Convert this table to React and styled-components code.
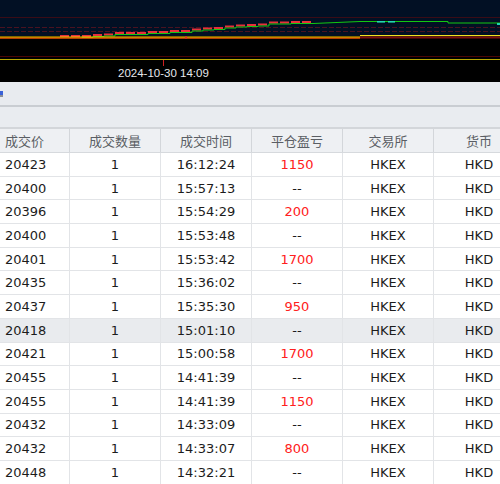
import React from "react";
import styled, { createGlobalStyle } from "styled-components";

const GlobalStyle = createGlobalStyle`
  html, body { margin: 0; padding: 0; background: #ffffff; }
  body { font-family: "DejaVu Sans", "Noto Sans CJK SC", sans-serif; }
`;

const columns = [
  { key: "price", label: "成交价", align: "left" },
  { key: "qty", label: "成交数量" },
  { key: "time", label: "成交时间" },
  { key: "pnl", label: "平仓盈亏" },
  { key: "exchange", label: "交易所" },
  { key: "currency", label: "货币" },
];

const trades = [
  ["20423", "1", "16:12:24", "1150"],
  ["20400", "1", "15:57:13", "--"],
  ["20396", "1", "15:54:29", "200"],
  ["20400", "1", "15:53:48", "--"],
  ["20401", "1", "15:53:42", "1700"],
  ["20435", "1", "15:36:02", "--"],
  ["20437", "1", "15:35:30", "950"],
  ["20418", "1", "15:01:10", "--"],
  ["20421", "1", "15:00:58", "1700"],
  ["20455", "1", "14:41:39", "--"],
  ["20455", "1", "14:41:39", "1150"],
  ["20432", "1", "14:33:09", "--"],
  ["20432", "1", "14:33:07", "800"],
  ["20448", "1", "14:32:21", "--"],
];

// red bar tops along the rising part of the chart
const bars = [35, 35, 35, 34, 33.5, 32, 32, 32, 31, 31, 30, 30, 28.5, 27.5, 27, 25.5, 24.5, 24, 23.5, 21.5, 21.5, 21, 21];

function MiniChart() {
  let step = "M 82 36.5";
  bars.forEach((y, i) => {
    if (i < 2) return;
    const x = 82 + (i - 2) * 11;
    step += ` L ${x} ${y + 2.5} L ${x + 11} ${y + 2.5}`;
  });
  step += " L 360 21.5 L 448 21.5 L 448 23 L 500 23";
  return (
    <ChartSvg width="500" height="66" viewBox="0 0 500 66">
      <rect x="0" y="0" width="500" height="36" fill="#021024" />
      <rect x="0" y="36" width="500" height="30" fill="#000000" />
      <line x1="0" y1="17.5" x2="500" y2="17.5" stroke="#3a0c16" />
      <line x1="0" y1="27.5" x2="500" y2="27.5" stroke="#4a1220" strokeDasharray="5 2" />
      <line x1="0" y1="31.5" x2="500" y2="31.5" stroke="#4a1220" strokeDasharray="5 2" />
      {bars.map((y, i) => (
        <rect key={i} x={60 + i * 11} y={y} width="9" height="2" fill="#e8303a" />
      ))}
      <path d={step} fill="none" stroke="#12c812" strokeWidth="1" />
      <rect x="377" y="21" width="8" height="1.6" fill="#20d8b0" />
      <rect x="388" y="21" width="7" height="1.6" fill="#20d8b0" />
      <rect x="497" y="23" width="3" height="2" fill="#20d8b0" />
      <rect x="0" y="36.5" width="360" height="1.2" fill="#ffd000" />
      <rect x="0" y="37.7" width="360" height="1" fill="#ff5a00" />
      <rect x="360" y="35" width="140" height="1.2" fill="#f0e020" />
      <rect x="360" y="36.5" width="140" height="2" fill="#7a1010" />
      <rect x="185" y="36.5" width="2" height="2" fill="#e03030" />
      <line x1="0" y1="56.5" x2="500" y2="56.5" stroke="#4a0606" />
      <line x1="0" y1="59.5" x2="500" y2="59.5" stroke="#b8a800" />
      <line x1="163.5" y1="60" x2="163.5" y2="66" stroke="#d02020" />
    </ChartSvg>
  );
}

export default function App() {
  return (
    <>
      <GlobalStyle />
      <Page>
        <ChartPanel>
          <MiniChart />
          <AxisLabel>2024-10-30 14:09</AxisLabel>
        </ChartPanel>
        <Toolbar>
          <ToolIcon />
        </Toolbar>
        <SubBar />
        <Table>
          <HeaderRow>
            {columns.map((c) => (
              <HeaderCell key={c.key} align={c.align}>
                {c.label}
              </HeaderCell>
            ))}
          </HeaderRow>
          {trades.map((t, i) => (
            <Row key={i} selected={i === 7}>
              <Cell align="left">{t[0]}</Cell>
              <Cell>{t[1]}</Cell>
              <Cell>{t[2]}</Cell>
              <Cell profit={t[3] !== "--"}>{t[3]}</Cell>
              <Cell>HKEX</Cell>
              <Cell>HKD</Cell>
            </Row>
          ))}
        </Table>
      </Page>
    </>
  );
}

const Page = styled.div`
  width: 500px;
  height: 484px;
  overflow: hidden;
  background: #ffffff;
`;

const ChartPanel = styled.div`
  height: 82px;
  background: #000000;
  display: flex;
  flex-direction: column;
`;

const ChartSvg = styled.svg`
  display: block;
`;

const AxisLabel = styled.div`
  padding-left: 118px;
  height: 16px;
  line-height: 14px;
  font-family: "Liberation Sans", sans-serif;
  font-size: 11.5px;
  color: #e6e8ec;
`;

const Toolbar = styled.div`
  height: 23px;
  background: #e8ebef;
  border-bottom: 2px solid #c9cdd2;
  display: flex;
  align-items: center;
`;

const ToolIcon = styled.span`
  display: block;
  width: 3px;
  height: 6px;
  background: linear-gradient(#3a62d8 0 60%, #8a8f98 60% 100%);
`;

const SubBar = styled.div`
  height: 20px;
  background: #e9ecf0;
  border-bottom: 2px solid #d3d6da;
`;

const Table = styled.div`
  width: 525px;
  font-size: 13px;
`;

const grid = `
  display: grid;
  grid-template-columns: 70px 91px 91px 91px 91px 91px;
`;

const HeaderRow = styled.div`
  ${grid}
  height: 23px;
  background: #eef0f3;
  border-bottom: 1px solid #d6d9dd;
`;

const HeaderCell = styled.div`
  display: flex;
  align-items: center;
  justify-content: ${(p) => (p.align === "left" ? "flex-start" : "center")};
  padding-left: ${(p) => (p.align === "left" ? "5px" : "0")};
  font-family: "Noto Sans CJK SC", sans-serif;
  color: #5a5e64;
  border-right: 1px solid #d3d6da;
`;

const Row = styled.div`
  ${grid}
  height: 23.7px;
  box-sizing: border-box;
  background: ${(p) => (p.selected ? "#e9ebee" : "#ffffff")};
  border-bottom: 1px solid #e2e4e7;
`;

const Cell = styled.div`
  display: flex;
  align-items: center;
  justify-content: ${(p) => (p.align === "left" ? "flex-start" : "center")};
  padding-left: ${(p) => (p.align === "left" ? "5px" : "0")};
  color: ${(p) => (p.profit ? "#ff2020" : "#1c1c1c")};
  border-right: 1px solid #e2e4e7;
`;
